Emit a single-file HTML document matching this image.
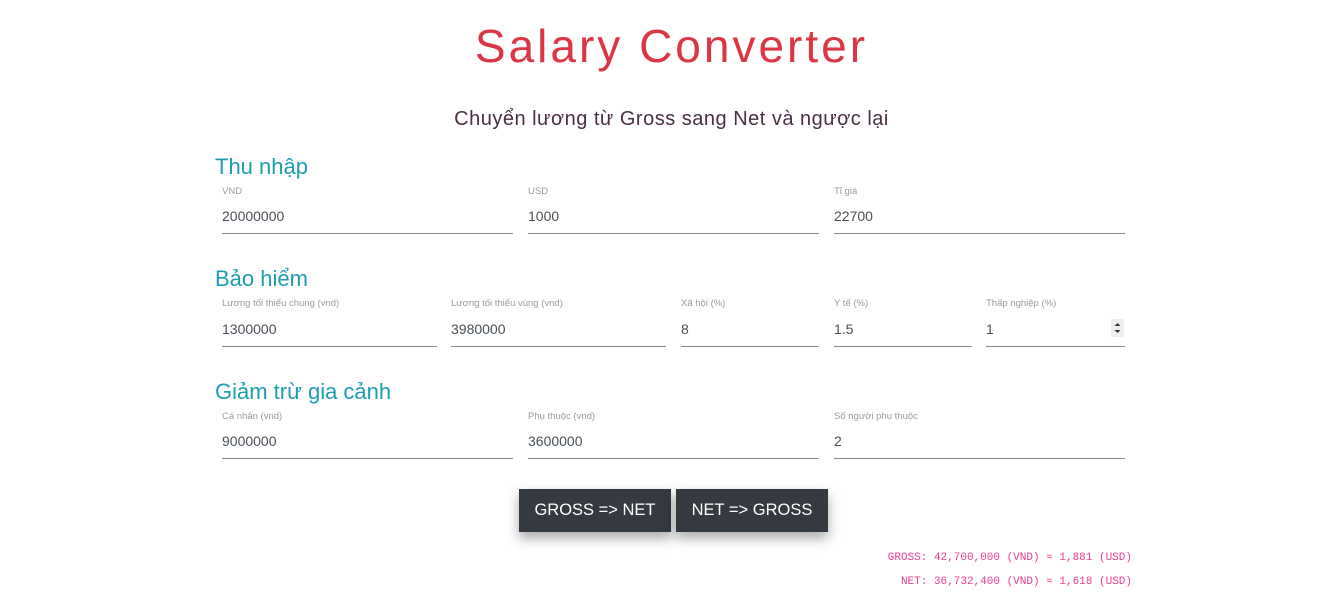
<!DOCTYPE html>
<html><head><meta charset="utf-8"><style>
body{margin:0;width:1343px;height:599px;background:#fff;font-family:"Liberation Sans",sans-serif;position:relative;overflow:hidden}
.a{position:absolute;white-space:nowrap}
h1{position:absolute;left:0;width:1343px;top:19px;margin:0;text-align:center;font-size:46px;font-weight:normal;color:#dc3545;letter-spacing:3px}
.sub{left:0;width:1343px;text-align:center;top:108px;font-size:20px;color:#4a2f45;letter-spacing:0.5px;font-weight:300}
.h{font-size:22px;color:#1b9db3;left:215px}
.f{position:absolute;border-bottom:1px solid #8a8a8a;height:1px}
.l{font-size:9.5px;color:#9a9a9a}
.v{font-size:14px;color:#495057}
.btn{position:absolute;top:489px;height:43px;background:#343a40;color:#fff;font-size:16.5px;line-height:43px;text-align:center;box-shadow:0 6px 12px rgba(0,0,0,.35)}
.r{font-family:"Liberation Mono",monospace;font-size:11px;color:#e83e8c;right:211px}
</style></head><body>
<h1>Salary Converter</h1>
<div class="a sub">Chuyển lương từ Gross sang Net và ngược lại</div>

<div class="a h" style="top:154px">Thu nhập</div>
<div class="a l" style="left:222px;top:186px">VND</div><div class="a v" style="left:222px;top:208px">20000000</div><div class="f" style="left:222px;width:291px;top:232px"></div>
<div class="a l" style="left:528px;top:186px">USD</div><div class="a v" style="left:528px;top:208px">1000</div><div class="f" style="left:528px;width:291px;top:232px"></div>
<div class="a l" style="left:834px;top:186px">Tỉ giá</div><div class="a v" style="left:834px;top:208px">22700</div><div class="f" style="left:834px;width:291px;top:232px"></div>

<div class="a h" style="top:266px">Bảo hiểm</div>
<div class="a l" style="left:222px;top:298px">Lương tối thiểu chung (vnd)</div><div class="a v" style="left:222px;top:321px">1300000</div><div class="f" style="left:222px;width:215px;top:345px"></div>
<div class="a l" style="left:451px;top:298px">Lương tối thiểu vùng (vnd)</div><div class="a v" style="left:451px;top:321px">3980000</div><div class="f" style="left:451px;width:215px;top:345px"></div>
<div class="a l" style="left:681px;top:298px">Xã hội (%)</div><div class="a v" style="left:681px;top:321px">8</div><div class="f" style="left:681px;width:138px;top:345px"></div>
<div class="a l" style="left:834px;top:298px">Y tế (%)</div><div class="a v" style="left:834px;top:321px">1.5</div><div class="f" style="left:834px;width:138px;top:345px"></div>
<div class="a l" style="left:986px;top:298px">Thấp nghiệp (%)</div><div class="a v" style="left:986px;top:321px">1</div><div class="f" style="left:986px;width:139px;top:345px"></div>
<div class="a" style="left:1111px;top:319px;width:13px;height:18px;background:#eee"><svg width="13" height="18"><path d="M3.5 7 L6.5 4 L9.5 7Z M3.5 11 L6.5 14 L9.5 11Z" fill="#333"/></svg></div>

<div class="a h" style="top:379px">Giảm trừ gia cảnh</div>
<div class="a l" style="left:222px;top:411px">Cá nhân (vnd)</div><div class="a v" style="left:222px;top:433px">9000000</div><div class="f" style="left:222px;width:291px;top:457px"></div>
<div class="a l" style="left:528px;top:411px">Phụ thuộc (vnd)</div><div class="a v" style="left:528px;top:433px">3600000</div><div class="f" style="left:528px;width:291px;top:457px"></div>
<div class="a l" style="left:834px;top:411px">Số người phụ thuộc</div><div class="a v" style="left:834px;top:433px">2</div><div class="f" style="left:834px;width:291px;top:457px"></div>

<div class="btn" style="left:519px;width:152px">GROSS =&gt; NET</div>
<div class="btn" style="left:676px;width:152px">NET =&gt; GROSS</div>

<div class="a r" style="top:552px">GROSS: 42,700,000 (VND) ≈ 1,881 (USD)</div>
<div class="a r" style="top:576px">NET: 36,732,400 (VND) ≈ 1,618 (USD)</div>
</body></html>
